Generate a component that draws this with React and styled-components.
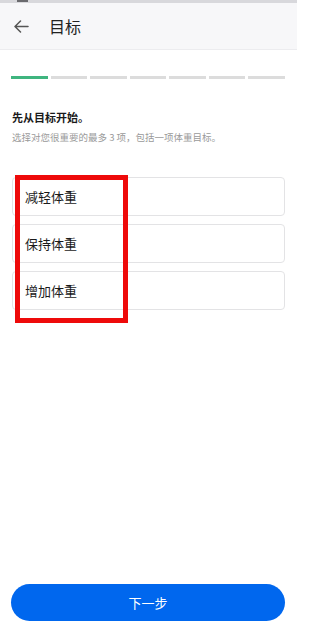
import React from "react";
import styled, { createGlobalStyle } from "styled-components";

const Global = createGlobalStyle`
  html, body { margin: 0; padding: 0; background: #ffffff; overflow: hidden; }
  body { font-family: "Noto Sans CJK SC", "Noto Sans", sans-serif; }
  * { box-sizing: border-box; }
`;

const Page = styled.div`
  width: 297px;
  height: 625px;
  display: flex;
  flex-direction: column;
  background: #ffffff;
  overflow: hidden;
`;

const StatusStrip = styled.div`
  height: 3px;
  background: #d8d8dc;
  display: flex;
  padding-left: 17px;
`;

const StatusMark = styled.span`
  width: 11px;
  height: 2px;
  background: #6a6a6e;
`;

const Header = styled.header`
  height: 47px;
  background: #f7f7f9;
  border-bottom: 1px solid #ececef;
  display: flex;
  align-items: center;
  padding-left: 14px;
  gap: 20px;
`;

const Title = styled.h1`
  margin: 0;
  font-size: 16px;
  font-weight: 400;
  color: #222;
  line-height: 1;
`;

const Content = styled.main`
  flex: 1;
  display: flex;
  flex-direction: column;
  padding: 26px 12px 0 11px;
`;

const Progress = styled.div`
  display: flex;
  gap: 3px;
`;

const Segment = styled.div`
  flex: 1;
  height: 3px;
  background: ${(p) => (p.$active ? "#3fb57f" : "#dcdcdc")};
`;

const Heading = styled.h2`
  margin: 30px 0 0 1px;
  font-size: 11px;
  font-weight: 700;
  color: #1a1a1a;
  line-height: 16px;
`;

const Sub = styled.p`
  margin: 5px 0 0 1px;
  font-size: 9.5px;
  color: #9a9a9a;
  line-height: 14px;
`;

const Options = styled.div`
  position: relative;
  margin-top: 33px;
  margin-left: 1px;
  display: flex;
  flex-direction: column;
  gap: 8px;
`;

const Option = styled.div`
  height: 39px;
  border: 1px solid #e3e3e5;
  border-radius: 4px;
  display: flex;
  align-items: center;
  padding-left: 12px;
  font-size: 13px;
  color: #1a1a1a;
`;

const Highlight = styled.div`
  position: absolute;
  left: 3px;
  top: -2px;
  width: 113px;
  height: 148px;
  border: 5px solid #ee0a0a;
  pointer-events: none;
`;

const Footer = styled.div`
  padding: 0 12px 4px 11px;
`;

const NextButton = styled.button`
  width: 100%;
  height: 37px;
  border: none;
  border-radius: 19px;
  background: #0067ee;
  color: #ffffff;
  font-family: inherit;
  font-size: 13px;
  display: flex;
  align-items: center;
  justify-content: center;
`;

const BackArrow = () => (
  <svg width="15" height="13" viewBox="0 0 15 13" fill="none">
    <path d="M14 6.5H1.5M6.5 1L1 6.5L6.5 12" stroke="#555" strokeWidth="1.5" strokeLinecap="round" strokeLinejoin="round" />
  </svg>
);

export default function App() {
  const options = ["减轻体重", "保持体重", "增加体重"];
  return (
    <Page>
      <Global />
      <StatusStrip>
        <StatusMark />
      </StatusStrip>
      <Header>
        <BackArrow />
        <Title>目标</Title>
      </Header>
      <Content>
        <Progress>
          {Array.from({ length: 7 }).map((_, i) => (
            <Segment key={i} $active={i === 0} />
          ))}
        </Progress>
        <Heading>先从目标开始。</Heading>
        <Sub>选择对您很重要的最多 3 项，包括一项体重目标。</Sub>
        <Options>
          {options.map((o) => (
            <Option key={o}>{o}</Option>
          ))}
          <Highlight />
        </Options>
      </Content>
      <Footer>
        <NextButton>下一步</NextButton>
      </Footer>
    </Page>
  );
}
